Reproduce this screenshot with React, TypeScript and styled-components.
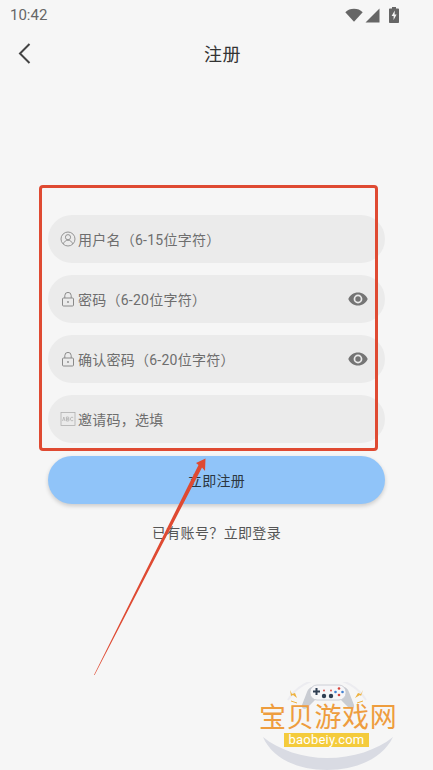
import React from "react";
import styled, { createGlobalStyle } from "styled-components";

const Global = createGlobalStyle`
  html, body { margin: 0; padding: 0; background: #f6f6f6; }
  * { box-sizing: border-box; }
`;

const FONT = `"Roboto", "Noto Sans CJK SC", sans-serif`;

const Page = styled.div`
  position: relative;
  width: 433px;
  height: 770px;
  overflow: hidden;
  background: #f6f6f6;
  font-family: ${FONT};
`;

const StatusBar = styled.div`
  height: 30px;
  padding: 0 34px 0 10px;
  display: flex;
  align-items: center;
  justify-content: space-between;
  color: #666;
  font-size: 15px;
`;

const StatusIcons = styled.div`
  display: flex;
  align-items: center;
  gap: 2px;
`;

const Header = styled.header`
  height: 46px;
  padding: 0 0 0 17px;
  display: grid;
  grid-template-columns: 21px 1fr 26px;
  align-items: center;
`;

const BackButton = styled.button`
  width: 21px;
  height: 28px;
  padding: 0;
  border: 0;
  background: none;
  display: flex;
  align-items: center;
`;

const Title = styled.h1`
  margin: 0;
  text-align: center;
  font-size: 18px;
  letter-spacing: 0.5px;
  font-weight: 400;
  color: #333;
`;

const Form = styled.form`
  margin-top: 139px;
  padding: 0 48px;
  display: flex;
  flex-direction: column;
  gap: 12px;
`;

const Field = styled.div`
  height: 48px;
  border-radius: 24px;
  background: #ebebeb;
  padding: 0 17px 0 12px;
  display: flex;
  align-items: center;
  gap: 2px;
`;

const Hint = styled.span`
  flex: 1;
  font-size: 14px;
  letter-spacing: 0.25px;
  color: #6e6e6e;
`;

const Submit = styled.button`
  margin-top: 1px;
  height: 48px;
  border: 0;
  border-radius: 24px;
  background: #90c4f9;
  box-shadow: 0 2px 4px rgba(0, 0, 0, 0.18);
  font-family: ${FONT};
  font-size: 14px;
  letter-spacing: 0.35px;
  color: #2b3640;
`;

const LoginLink = styled.p`
  margin: 18px 0 0;
  text-align: center;
  font-size: 14px;
  letter-spacing: 0.35px;
  color: #555;
`;

const Highlight = styled.div`
  position: absolute;
  left: 39px;
  top: 185px;
  width: 339px;
  height: 266px;
  border: 3px solid #df4a32;
  border-radius: 4px;
  pointer-events: none;
`;

const ArrowLayer = styled.svg`
  position: absolute;
  left: 85px;
  top: 450px;
  pointer-events: none;
`;

const Watermark = styled.div`
  position: absolute;
  left: 255px;
  top: 682px;
  width: 150px;
  height: 88px;
`;

const WatermarkArt = styled.svg`
  position: absolute;
  inset: 0;
`;

const BrandName = styled.div`
  position: absolute;
  left: 4px;
  top: 22px;
  font-size: 27px;
  line-height: 28px;
  letter-spacing: 0.7px;
  color: #ee9d3e;
  white-space: nowrap;
`;

const BrandUrl = styled.div`
  position: absolute;
  left: 29px;
  top: 51px;
  width: 85px;
  height: 14px;
  background: #f4cb3c;
  color: #fff;
  font-size: 13px;
  line-height: 14px;
  text-align: center;
  letter-spacing: 0.2px;
`;

const UserIcon = () => (
  <svg width="16" height="16" viewBox="0 0 16 16" fill="none" stroke="#8a8a8a" strokeWidth="0.9">
    <circle cx="8" cy="8" r="7" />
    <circle cx="8" cy="6.2" r="2.6" />
    <path d="M3.4 12.8c.8-2.4 2.6-3.6 4.6-3.6s3.8 1.2 4.600 3.600" />
  </svg>
);

const LockIcon = () => (
  <svg width="16" height="16" viewBox="0 0 16 16" fill="none" stroke="#8a8a8a" strokeWidth="1">
    <rect x="2.5" y="7" width="11" height="8" rx="1" />
    <path d="M4.8 7V4.6a3.2 3.2 0 0 1 6.4 0V7" />
    <circle cx="8" cy="11" r="0.9" fill="#8a8a8a" stroke="none" />
  </svg>
);

const CodeIcon = () => (
  <svg width="16" height="16" viewBox="0 0 16 16" fill="none" stroke="#b0b0b0" strokeWidth="0.8">
    <rect x="1" y="1.5" width="14" height="13" />
    <path d="M2.6 10l1.2-4 1.2 4M6.4 6h1.5a1 1 0 0 1 0 2H6.4h1.7a1 1 0 0 1 0 2H6.4zM13.2 6.6a1.8 1.8 0 1 0 0 2.8" />
  </svg>
);

const EyeIcon = () => (
  <svg width="20" height="14" viewBox="0 0 20 14">
    <path
      fillRule="evenodd"
      fill="#757575"
      d="M10 0.5C5.6 0.5 2 3.1 0.3 7 2 10.9 5.6 13.5 10 13.5s8-2.6 9.7-6.5C18 3.1 14.4 0.5 10 0.5zM10 11.4A4.4 4.4 0 1 1 10 2.6a4.4 4.4 0 0 1 0 8.8z"
    />
    <circle cx="10" cy="7" r="2.7" fill="#757575" />
  </svg>
);

const WifiIcon = () => (
  <svg width="18" height="14" viewBox="0 0 18 14">
    <path fill="#666" d="M0.3 4.2C2.6 1.9 5.6.8 9 .8s6.400 1.100 8.700 3.400L9 13.800z" />
  </svg>
);

const SignalIcon = () => (
  <svg width="15" height="15" viewBox="0 0 15 15">
    <path fill="#666" d="M0.500 14.500L14.500 .5v14z" />
  </svg>
);

const BatteryIcon = () => (
  <svg width="10" height="16" viewBox="0 0 10 16" style={{ marginLeft: 7 }}>
    <path fill="#666" d="M3 0h4v1.500h2.200a.8.800 0 0 1 .8.800v12.900a.8.800 0 0 1-.8.800H.8a.8.800 0 0 1-.8-.8V2.300a.8.800 0 0 1 .8-.8H3z" />
    <path fill="#f6f6f6" d="M5.800 3.500L2.600 9h2v4l3-5.500H5.600z" />
  </svg>
);

export default function App() {
  return (
    <Page>
      <Global />
      <StatusBar>
        <span>10:42</span>
        <StatusIcons>
          <WifiIcon />
          <SignalIcon />
          <BatteryIcon />
        </StatusIcons>
      </StatusBar>
      <Header>
        <BackButton type="button" aria-label="返回">
          <svg width="14" height="21" viewBox="0 0 14 21" fill="none" stroke="#444" strokeWidth="2">
            <path d="M12.500 1L3 10.500l9.500 9.500" />
          </svg>
        </BackButton>
        <Title>注册</Title>
      </Header>
      <Form>
        <Field>
          <UserIcon />
          <Hint>用户名（6-15位字符）</Hint>
        </Field>
        <Field>
          <LockIcon />
          <Hint>密码（6-20位字符）</Hint>
          <EyeIcon />
        </Field>
        <Field>
          <LockIcon />
          <Hint>确认密码（6-20位字符）</Hint>
          <EyeIcon />
        </Field>
        <Field>
          <CodeIcon />
          <Hint>邀请码，选填</Hint>
        </Field>
        <Submit type="button">立即注册</Submit>
      </Form>
      <LoginLink>已有账号？立即登录</LoginLink>

      <Highlight />
      <ArrowLayer width="130" height="230" viewBox="0 0 130 230">
        <path d="M9 225L113.500 15L111 13L120.500 8.500L120 21L117 17.500L9.600 225z" fill="#df4a32" />
      </ArrowLayer>

      <Watermark>
        <WatermarkArt width="150" height="88" viewBox="0 0 150 88">
          <path d="M8 55c16 13 40 21 64 21 26 0 50-8 66-21-10 21-36 33-66 33S17 76 8 55z" fill="#d9dbe3" />
          <path d="M33 18a46 46 0 0 1 78 0" fill="none" stroke="#ececf0" strokeWidth="2" />
          <path d="M58 5h30c3 0 5 2 6 5l5 13c1 4-3 5-6 2l-7-7H60l-7 7c-3 3-7 2-6-2l5-13c1-3 3-5 6-5z" fill="#c9ccd2" />
          <rect x="55" y="3" width="36" height="15" rx="7" fill="#f6f6f8" stroke="#c4c7ce" strokeWidth="0.800" />
          <path d="M58 8.500h2.500V6h2v2.500h2.500v2h-2.500V13h-2v-2.500H58z" fill="#2f3e52" />
          <circle cx="69" cy="14" r="2.200" fill="#2f3e52" />
          <circle cx="76" cy="14" r="2.200" fill="#2f3e52" />
          <circle cx="69" cy="8.500" r="0.900" fill="#d9463e" />
          <circle cx="76" cy="8.500" r="0.900" fill="#d9463e" />
          <circle cx="84" cy="6.500" r="1.300" fill="#d9463e" />
          <circle cx="87.500" cy="10" r="1.300" fill="#3f7fd0" />
          <circle cx="80.500" cy="10" r="1.300" fill="#3f7fd0" />
          <circle cx="84" cy="13" r="1.300" fill="#d9463e" />
          <path d="M35 8l2 4 3-1 2 5-4-3-2 1zM108 8l-2 4-3-1-3 5 5-3 1 1z" fill="#eeb23f" />
          <path d="M36 19l6 2M108 19l-6 2" stroke="#eeb23f" strokeWidth="1" />
        </WatermarkArt>
        <BrandName>宝贝游戏网</BrandName>
        <BrandUrl>baobeiy.com</BrandUrl>
      </Watermark>
    </Page>
  );
}
